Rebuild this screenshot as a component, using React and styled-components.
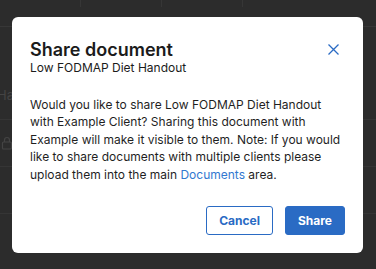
import styled, { createGlobalStyle } from "styled-components";

const GlobalStyle = createGlobalStyle`
  html, body {
    margin: 0;
    padding: 0;
    background: #2c2c2c;
    font-family: Inter, "Noto Sans", sans-serif;
  }
`;

export default function App() {
  return (
    <>
      <GlobalStyle />
      <Page>
        <TopBar>
          <TopCell />
          <TopCell />
          <TopCell />
        </TopBar>
        <Row>
          <RowText>Ha</RowText>
        </Row>
        <Row>
          <LockIcon viewBox="0 0 12 14" fill="none">
            <rect x="1.5" y="6" width="9" height="7" rx="1" stroke="#444" strokeWidth="1.2" />
            <path d="M3.5 6V4a2.5 2.5 0 0 1 5 0v2" stroke="#444" strokeWidth="1.2" />
          </LockIcon>
        </Row>
        <Row />
        <Overlay>
          <Dialog>
            <Header>
              <TitleBlock>
                <Title>Share document</Title>
                <Subtitle>Low FODMAP Diet Handout</Subtitle>
              </TitleBlock>
              <CloseButton aria-label="Close">
                <svg width="11" height="11" viewBox="0 0 11 11" fill="none">
                  <path d="M0.5 0.5l10 10M10.5 0.5l-10 10" stroke="#2a6bc4" strokeWidth="1.3" />
                </svg>
              </CloseButton>
            </Header>
            <Body>
              Would you like to share Low FODMAP Diet Handout with Example Client? Sharing this
              document with Example will make it visible to them. Note: If you would like to
              share documents with multiple clients please upload them into the main{" "}
              <Link href="#">Documents</Link> area.
            </Body>
            <Actions>
              <Button>Cancel</Button>
              <Button primary>Share</Button>
            </Actions>
          </Dialog>
        </Overlay>
      </Page>
    </>
  );
}

const Page = styled.div`
  position: relative;
  width: 376px;
  height: 269px;
  overflow: hidden;
  background: #2c2c2c;
`;

const TopBar = styled.div`
  display: flex;
  height: 26px;
  border-bottom: 1px solid #373737;
`;

const TopCell = styled.div`
  width: 80px;
  height: 7px;
  border-right: 1px solid #363636;
`;

const Row = styled.div`
  display: flex;
  align-items: center;
  height: 46px;
  border-bottom: 1px solid #353535;
  &:nth-of-type(2) {
    height: 92px;
  }
`;

const RowText = styled.span`
  margin-left: -3px;
  margin-top: 44px;
  font-size: 13px;
  color: #444;
`;

const LockIcon = styled.svg`
  width: 12px;
  height: 14px;
  margin-left: 1px;
`;

const Overlay = styled.div`
  position: absolute;
  inset: 0;
`;

const Dialog = styled.div`
  position: absolute;
  left: 12px;
  top: 17px;
  width: 351px;
  height: 236px;
  box-sizing: border-box;
  padding: 21.5px 18px 18px;
  background: #ffffff;
  border-radius: 6px;
  display: flex;
  flex-direction: column;
`;

const Header = styled.div`
  display: flex;
  justify-content: space-between;
  align-items: flex-start;
`;

const TitleBlock = styled.div`
  display: flex;
  flex-direction: column;
`;

const Title = styled.h2`
  margin: 0;
  font-size: 18px;
  line-height: 22px;
  font-weight: 600;
  color: #1b1b1b;
`;

const Subtitle = styled.div`
  font-size: 12px;
  line-height: 14px;
  color: #1b1b1b;
`;

const CloseButton = styled.button`
  width: 24px;
  height: 24px;
  margin-top: -1px;
  padding: 0;
  border: none;
  background: none;
  display: flex;
  align-items: center;
  justify-content: center;
`;

const Body = styled.p`
  margin: 21px 0 0;
  font-size: 12px;
  line-height: 17.6px;
  color: #1f1f1f;
`;

const Link = styled.a`
  color: #3278d0;
  text-decoration: none;
`;

const Actions = styled.div`
  margin-top: auto;
  display: flex;
  justify-content: flex-end;
  gap: 12px;
`;

const Button = styled.button`
  height: 29px;
  padding: 0 12px;
  border-radius: 3px;
  border: 1px solid #2a6bc4;
  background: ${({ primary }) => (primary ? "#2a6bc4" : "#ffffff")};
  color: ${({ primary }) => (primary ? "#ffffff" : "#2a6bc4")};
  font-family: Inter, "Noto Sans", sans-serif;
  font-size: 12px;
  font-weight: 700;
`;
